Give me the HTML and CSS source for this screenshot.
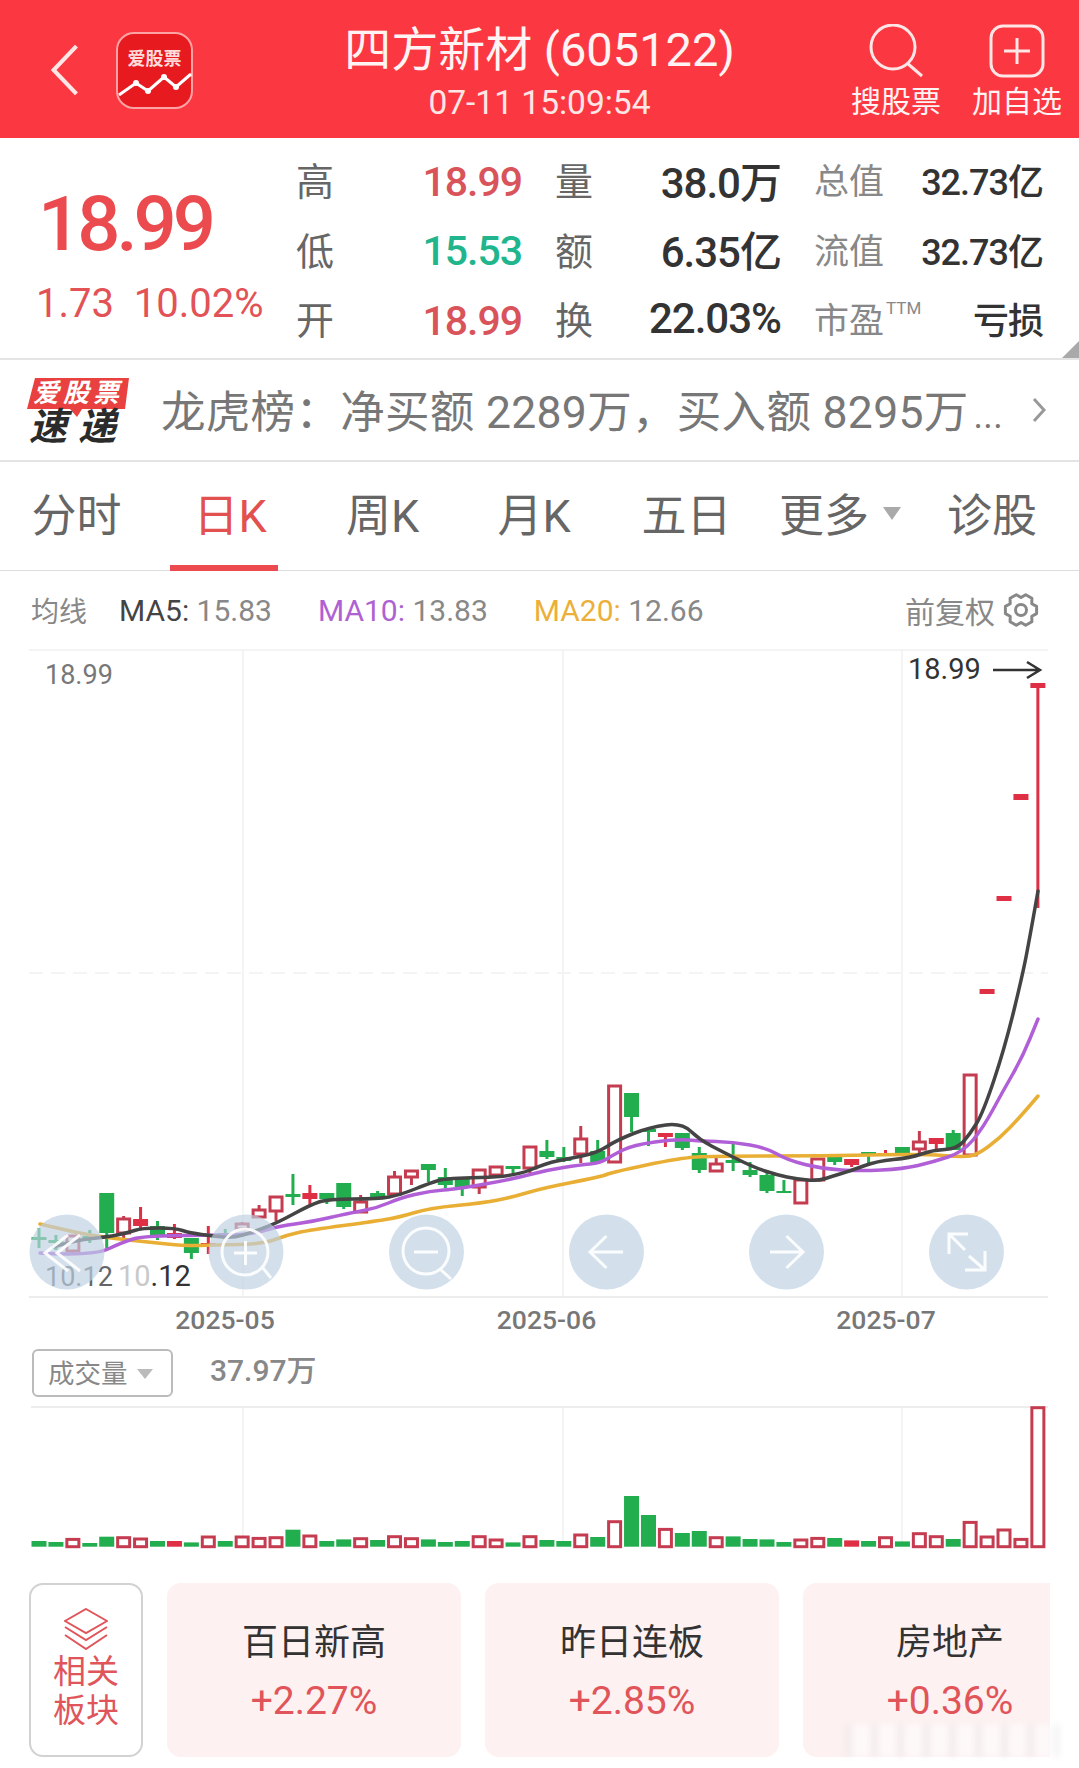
FILE: index.html
```html
<!DOCTYPE html>
<html lang="zh-CN">
<head>
    <meta charset="UTF-8">
    <meta name="viewport" content="width=device-width, initial-scale=1.0">
    <title>四方新材 (605122)</title>
    <link rel="stylesheet" href="styles.css">
</head>
<body>

    <header class="topbar">
        <div class="topbar-left">
            <svg class="back-icon" viewBox="0 0 26 50"><polyline points="24,2 2,25 24,48"/></svg>
            <svg class="app-logo" viewBox="0 0 77 77">
                <rect x="1" y="1" width="75" height="75" rx="17" class="app-logo-bg"/>
                <text x="38.5" y="33" class="app-logo-text">爱股票</text>
                <polyline points="3,63 20,51 32,59 48,45 60,55 75,42" class="app-logo-line"/>
                <circle cx="20" cy="51" r="3" fill="#fff"/>
                <circle cx="32" cy="59" r="3" fill="#fff"/>
                <circle cx="48" cy="45" r="3" fill="#fff"/>
                <circle cx="60" cy="55" r="3" fill="#fff"/>
            </svg>
        </div>
        <div class="topbar-title">
            <h1>四方新材 (605122)</h1>
            <div class="time">07-11 15:09:54</div>
        </div>
        <div class="topbar-actions">
            <div class="action">
                <svg viewBox="0 0 56 54"><circle cx="25" cy="23" r="22"/><line x1="39" y1="39" x2="54" y2="52"/></svg>
                <span>搜股票</span>
            </div>
            <div class="action">
                <svg viewBox="0 0 56 54"><rect x="2" y="2" width="52" height="50" rx="12"/><line x1="15" y1="27" x2="41" y2="27"/><line x1="28" y1="14" x2="28" y2="40"/></svg>
                <span>加自选</span>
            </div>
        </div>
    </header>

    <section class="quote">
        <div class="price-box">
            <div class="price">18.99</div>
            <div class="change">1.73&nbsp; 10.02%</div>
        </div>
        <div class="stats">
            <div class="stat"><span class="stat-label">高</span><span class="stat-num up">18.99</span></div>
            <div class="stat"><span class="stat-label">量</span><span class="stat-num">38.0万</span></div>
            <div class="stat small"><span class="stat-label">总值</span><span class="stat-num">32.73亿</span></div>
            <div class="stat"><span class="stat-label">低</span><span class="stat-num down">15.53</span></div>
            <div class="stat"><span class="stat-label">额</span><span class="stat-num">6.35亿</span></div>
            <div class="stat small"><span class="stat-label">流值</span><span class="stat-num">32.73亿</span></div>
            <div class="stat"><span class="stat-label">开</span><span class="stat-num up">18.99</span></div>
            <div class="stat"><span class="stat-label">换</span><span class="stat-num">22.03%</span></div>
            <div class="stat small"><span class="stat-label">市盈<sup>TTM</sup></span><span class="stat-num">亏损</span></div>
        </div>
        <div class="corner"></div>
    </section>

    <section class="news">
        <svg class="news-logo" viewBox="0 -12 112 96">
            <polygon points="9,1 103,1 99,32 56,32 51,40 44,32 1,32" fill="#e8413f"/>
            <text x="52" y="25" class="news-logo-top">爱股票</text>
            <text x="3" y="63" class="news-logo-bottom">速递</text>
        </svg>
        <div class="news-text">龙虎榜：净买额 2289万，买入额 8295万<small>...</small></div>
        <svg class="news-arrow" viewBox="0 0 14 26"><polyline points="2,2 12,13 2,24"/></svg>
    </section>

    <nav class="tabs">
        <div class="tab">分时</div>
        <div class="tab active">日K</div>
        <div class="tab">周K</div>
        <div class="tab">月K</div>
        <div class="tab">五日</div>
        <div class="tab">更多<i class="tab-caret"></i></div>
        <div class="tab">诊股</div>
    </nav>

    <section class="ma-row">
        <span class="ma-title">均线</span>
        <span class="ma-item"><b class="ma5">MA5:</b> 15.83</span>
        <span class="ma-item"><b class="ma10">MA10:</b> 13.83</span>
        <span class="ma-item"><b class="ma20">MA20:</b> 12.66</span>
        <span class="ma-adjust">前复权
            <svg viewBox="-18 -18 36 36"><polygon points="15.6,3.6 10.8,6.25 10.9,11.7 4.7,15.3 0,12.5 -4.7,15.3 -10.9,11.7 -10.8,6.25 -15.6,3.6 -15.6,-3.6 -10.8,-6.25 -10.9,-11.7 -4.7,-15.3 0,-12.5 4.7,-15.3 10.9,-11.7 10.8,-6.25 15.6,-3.6"/><circle r="5.5"/></svg>
        </span>
    </section>

    <svg class="price-chart" viewBox="0 649 1079 701">
        <line x1="29" y1="650" x2="1048" y2="650" class="grid"/>
        <line x1="29" y1="1297" x2="1048" y2="1297" class="grid-dark"/>
        <line x1="243" y1="650" x2="243" y2="1297" class="grid"/>
        <line x1="563" y1="650" x2="563" y2="1297" class="grid"/>
        <line x1="902" y1="650" x2="902" y2="1297" class="grid"/>
        <line x1="29" y1="973" x2="1048" y2="973" class="grid dashed"/>

        <g id="candles"></g>
        <g id="maLines"></g>

        <text x="45" y="684" class="chart-high">18.99</text>
        <text x="908" y="679" class="chart-last">18.99</text>
        <path d="M993 670H1039M1027 662L1040 670L1027 678" class="last-arrow"/>

        <text x="45" y="1286" class="chart-low">10.12</text>
        <text x="118" y="1286" class="chart-low-top"><tspan fill="#c9c9c9">10</tspan><tspan fill="#333">.12</tspan></text>

        <circle cx="67" cy="1252" r="37.5" class="nav-btn"/>
        <path d="M68 1235L45 1253L68 1271M80 1235L57 1253L80 1271" class="nav-icon"/>
        <circle cx="246" cy="1252" r="37.5" class="nav-btn"/>
        <path d="M234 1253H257M245.500 1241V1265M263 1268L271 1278" class="nav-icon"/>
        <circle cx="245" cy="1252" r="23" class="nav-icon"/>
        <circle cx="426.500" cy="1252" r="37.5" class="nav-btn"/>
        <circle cx="426" cy="1251" r="23" class="nav-icon"/>
        <path d="M414 1252H438M441 1270L451 1279" class="nav-icon"/>
        <circle cx="606.500" cy="1252" r="37.5" class="nav-btn"/>
        <path d="M623 1252H590M606.500 1236L590 1252L606.500 1268" class="nav-icon"/>
        <circle cx="786.500" cy="1252" r="37.5" class="nav-btn"/>
        <path d="M770 1252H803M786.500 1236L803 1252L786.500 1268" class="nav-icon"/>
        <circle cx="966.500" cy="1252" r="37.5" class="nav-btn"/>
        <path d="M968 1234H949V1254M949 1234L965 1250M965 1270H985V1251M985 1270L969 1256" class="nav-icon"/>

        <text x="225" y="1329" class="axis-date">2025-05</text>
        <text x="546.500" y="1329" class="axis-date">2025-06</text>
        <text x="886" y="1329" class="axis-date">2025-07</text>
    </svg>

    <section class="vol-row">
        <div class="vol-select">成交量<i class="vol-caret"></i></div>
        <div class="vol-value">37.97万</div>
    </section>

    <svg class="vol-chart" viewBox="0 1405 1079 155">
        <line x1="31" y1="1406" x2="1048" y2="1406" class="grid-dark"/>
        <line x1="243" y1="1406" x2="243" y2="1546" class="grid"/>
        <line x1="563" y1="1406" x2="563" y2="1546" class="grid"/>
        <line x1="902" y1="1406" x2="902" y2="1546" class="grid"/>
        <g id="volBars"></g>
    </svg>

    <section class="sectors">
        <div class="sector-head">
            <svg viewBox="0 0 44 42">
                <polygon points="22,1 43,13 22,25 1,13"/>
                <polyline points="1,19 22,32 43,19"/>
                <polyline points="1,27 22,41 43,27"/>
            </svg>
            <div>相关<br>板块</div>
        </div>
        <div class="sector-list">
            <div class="sector-card"><div class="sector-name">百日新高</div><div class="sector-pct">+2.27%</div></div>
            <div class="sector-card"><div class="sector-name">昨日连板</div><div class="sector-pct">+2.85%</div></div>
            <div class="sector-card"><div class="sector-name">房地产</div><div class="sector-pct">+0.36%</div></div>
        </div>
    </section>

    <div class="watermark"></div>

    <script src="chart.js"></script>
</body>
</html>
```
FILE: styles.css
```css
* {
    box-sizing: border-box;
}
body {
    margin: 0;
    width: 1079px;
    height: 1768px;
    overflow: hidden;
    position: relative;
    background-color: white;
    font-family: Roboto, "Noto Sans CJK SC", sans-serif;
    color: #333;
}

/* top bar */
.topbar {
    height: 138px;
    background-color: #fb3841;
    display: grid;
    grid-template-columns: 1fr auto 1fr;
    align-items: center;
    color: #fff3f3;
}
.topbar-left {
    display: flex;
    align-items: center;
    padding-left: 51px;
    gap: 37px;
}
.back-icon {
    width: 28px;
    height: 52px;
    fill: none;
    stroke: #ffe6e6;
    stroke-width: 4;
    margin-top: 2px;
}
.app-logo {
    width: 77px;
    height: 77px;
    margin-top: 2px;
}
.app-logo-bg {
    fill: #e71a1f;
    stroke: #fda3a6;
    stroke-width: 2;
}
.app-logo-text {
    fill: #ffdcdc;
    font-size: 18px;
    font-weight: 700;
    text-anchor: middle;
}
.app-logo-line {
    fill: none;
    stroke: #fff;
    stroke-width: 3;
}
.topbar-title {
    align-self: start;
    padding-top: 23px;
    text-align: center;
}
.topbar-title h1 {
    margin: 0;
    font-size: 47px;
    font-weight: 400;
    line-height: 54px;
}
.time {
    font-size: 33.5px;
    line-height: 40px;
    margin-top: 6px;
    color: #ffe6e6;
}
.topbar-actions {
    display: flex;
    justify-content: flex-end;
    padding-right: 16px;
    gap: 29px;
}
.action {
    width: 92px;
    display: flex;
    flex-direction: column;
    align-items: center;
    font-size: 30px;
    line-height: 34px;
    white-space: nowrap;
    padding-top: 4px;
}
.action svg {
    width: 56px;
    height: 54px;
    fill: none;
    stroke: #ffe6e6;
    stroke-width: 3;
    margin-bottom: 7px;
}

/* quote panel */
.quote {
    height: 222px;
    border-bottom: 2px solid #e4e4e4;
    display: flex;
    position: relative;
}
.price-box {
    width: 296px;
    padding-left: 36px;
}
.price {
    font-size: 76px;
    font-weight: 500;
    line-height: 84px;
    letter-spacing: -4px;
    margin-top: 44px;
    padding-left: 2px;
    color: #eb4a4e;
}
.change {
    font-size: 40px;
    line-height: 48px;
    margin-top: 14px;
    color: #e25256;
    white-space: nowrap;
}
.stats {
    display: grid;
    grid-template-columns: 226px 226px 229px;
    grid-auto-rows: 69.5px;
    column-gap: 33px;
    padding-top: 9px;
}
.stat {
    display: flex;
    justify-content: space-between;
    align-items: center;
}
.stat-label {
    font-size: 38px;
    margin-bottom: 6px;
    color: #666;
}
.stat-num {
    font-size: 42px;
    font-weight: 500;
    letter-spacing: -1px;
    margin-bottom: 5px;
}
.stat-num.up {
    font-size: 41px;
    margin-bottom: 0;
    color: #d9545a;
}
.stat-num.down {
    font-size: 41px;
    margin-bottom: 0;
    color: #20b58c;
}
.stat.small .stat-label {
    font-size: 35px;
    color: #888;
}
.stat.small .stat-num {
    font-size: 36px;
}
.stat-label sup {
    font-size: 17px;
    vertical-align: 19px;
    line-height: 0;
    margin-left: 2px;
}
.corner {
    position: absolute;
    right: 0;
    bottom: 0;
    width: 0;
    height: 0;
    border-left: 17px solid transparent;
    border-bottom: 17px solid #a9a9a9;
}

/* news line */
.news {
    height: 102px;
    border-bottom: 2px solid #e4e4e4;
    display: flex;
    align-items: center;
    padding-left: 26px;
}
.news-logo {
    flex: none;
    width: 112px;
    height: 96px;
    margin-top: 6px;
}
.news-logo-top {
    fill: #fff;
    font-size: 26px;
    font-weight: 700;
    font-style: italic;
    letter-spacing: 4px;
    text-anchor: middle;
}
.news-logo-bottom {
    fill: #2b2b2b;
    font-size: 38px;
    font-weight: 700;
    font-style: italic;
    letter-spacing: 11px;
}
.news-text {
    margin-left: 23px;
    margin-bottom: 4px;
    width: 840px;
    font-size: 44.5px;
    letter-spacing: 0.3px;
    color: #777;
    white-space: nowrap;
}
.news-text small {
    font-size: 36px;
    margin-left: 5px;
}
.news-arrow {
    flex: none;
    width: 14px;
    height: 26px;
    margin-left: 31px;
    fill: none;
    stroke: #999;
    stroke-width: 3;
}

/* period tabs */
.tabs {
    height: 109px;
    border-bottom: 1px solid #ddd;
    display: grid;
    grid-template-columns: 153px 154px 151px 152px 153px 154px 150px;
}
.tab {
    position: relative;
    display: flex;
    align-items: center;
    justify-content: center;
    font-size: 45px;
    color: #666;
    padding-bottom: 7px;
}
.tab.active {
    color: #e2504f;
}
.tab.active::after {
    content: "";
    position: absolute;
    left: 17px;
    bottom: -1px;
    width: 108px;
    height: 6px;
    background-color: #ec4a4e;
}
.tab-caret {
    margin-left: 14px;
    margin-top: 2px;
    border-left: 9px solid transparent;
    border-right: 9px solid transparent;
    border-top: 13px solid #aaa;
}

/* moving averages */
.ma-row {
    height: 78px;
    display: flex;
    align-items: center;
    padding: 0 40px 0 31px;
    font-size: 30px;
    color: #888;
}
.ma-title {
    font-size: 28px;
    margin-right: 32px;
}
.ma-item {
    margin-right: 46px;
    white-space: nowrap;
}
.ma-item b {
    font-weight: 400;
}
.ma5 {
    color: #444;
}
.ma10 {
    color: #ae62d2;
}
.ma20 {
    color: #ebb03a;
}
.ma-adjust {
    margin-left: auto;
    font-size: 30px;
    display: flex;
    align-items: center;
    gap: 8px;
}
.ma-adjust svg {
    width: 36px;
    height: 36px;
    fill: none;
    stroke: #888;
    stroke-width: 3;
    stroke-linejoin: round;
}

/* charts */
.price-chart {
    display: block;
    width: 1079px;
    height: 701px;
}
.vol-chart {
    display: block;
    width: 1079px;
    height: 155px;
}
.grid {
    stroke: #f1f1f1;
    stroke-width: 1.5;
}
.grid-dark {
    stroke: #e6e6e6;
    stroke-width: 1.5;
}
.dashed {
    stroke-dasharray: 14 8;
}
.ma-line {
    fill: none;
    stroke-width: 3.5;
    stroke-linejoin: round;
    stroke-linecap: round;
}
.chart-high {
    font-size: 27px;
    fill: #777;
}
.chart-last {
    font-size: 29px;
    fill: #333;
}
.last-arrow {
    fill: none;
    stroke: #333;
    stroke-width: 2.5;
}
.chart-low {
    font-size: 27px;
    fill: #666;
}
.chart-low-top {
    font-size: 29px;
}
.nav-btn {
    fill: rgba(190, 209, 226, 0.67);
}
.nav-icon {
    fill: none;
    stroke: #fff;
    stroke-width: 3;
    opacity: 0.9;
}
.axis-date {
    font-size: 26.5px;
    font-weight: 500;
    fill: #777;
    text-anchor: middle;
}

/* volume header */
.vol-row {
    height: 56px;
    display: flex;
    align-items: flex-start;
    padding-left: 32px;
}
.vol-select {
    width: 141px;
    height: 48px;
    margin-top: -1px;
    border: 2px solid #bbb;
    border-radius: 6px;
    display: flex;
    align-items: center;
    padding: 0 0 4px 14px;
    font-size: 26.5px;
    color: #888;
}
.vol-caret {
    margin-left: 9px;
    margin-top: 6px;
    border-left: 8px solid transparent;
    border-right: 8px solid transparent;
    border-top: 10px solid #bbb;
}
.vol-value {
    margin-left: 37px;
    font-size: 30px;
    font-weight: 500;
    line-height: 42px;
    color: #888;
}

/* related sectors */
.sectors {
    margin-top: 22px;
    height: 174px;
    display: flex;
    gap: 24px;
    padding: 0 29px;
}
.sector-head {
    flex: none;
    width: 114px;
    border: 2px solid #d2d2d2;
    border-radius: 14px;
    display: flex;
    flex-direction: column;
    align-items: center;
    padding-top: 23px;
    font-size: 33px;
    line-height: 39px;
    text-align: center;
    color: #e0555a;
}
.sector-head svg {
    width: 44px;
    height: 42px;
    fill: none;
    stroke: #e0555a;
    stroke-width: 2;
    margin-bottom: 2px;
}
.sector-list {
    flex: 1;
    display: flex;
    gap: 24px;
    overflow: hidden;
}
.sector-card {
    flex: none;
    width: 294px;
    background-color: #fdf1f1;
    border-radius: 14px;
    text-align: center;
    padding-top: 35px;
}
.sector-name {
    font-size: 36px;
    line-height: 50px;
    color: #333;
}
.sector-pct {
    font-size: 39px;
    line-height: 46px;
    margin-top: 10px;
    color: #e0545a;
}

/* faint stamp over the bottom corner */
.watermark {
    position: absolute;
    left: 845px;
    top: 1724px;
    width: 225px;
    height: 33px;
    background: repeating-linear-gradient(90deg, rgba(228, 228, 228, 0.4) 0 7px, rgba(255, 255, 255, 0.55) 7px 26px);
    filter: blur(3px);
}
```
FILE: chart.js
```js
const SVG_NS = 'http://www.w3.org/2000/svg';
const STEP = 16.93;
const COLORS = { u: '#c53c50', r: '#de2f45', g: '#22ad4f' };
const BASELINE = 1545.7;

// body top, body bottom, wick top, wick bottom, type (u = hollow, r = red, g = green)
const candles = [
    [1237, 1240, 1228, 1248, 'g'], [1240, 1243, 1235, 1250, 'g'], [1236, 1251, 1236, 1253, 'u'],
    [1236, 1239, 1230, 1243, 'g'], [1193, 1233, 1193, 1248, 'g'], [1219, 1233, 1216, 1243, 'u'],
    [1219, 1226, 1207, 1230, 'r'], [1226, 1235, 1221, 1240, 'g'], [1233, 1238, 1224, 1239, 'r'],
    [1238, 1253, 1238, 1259, 'g'], [1243, 1246, 1226, 1254, 'r'], [1233, 1238, 1229, 1240, 'g'],
    [1224, 1229, 1222, 1230, 'u'], [1210, 1217, 1205, 1217, 'u'], [1197, 1211, 1197, 1221, 'u'],
    [1194, 1197, 1174, 1205, 'g'], [1193, 1199, 1185, 1205, 'r'], [1193, 1199, 1193, 1204, 'g'],
    [1183, 1207, 1183, 1209, 'g'], [1202, 1212, 1195, 1212, 'u'], [1193, 1197, 1191, 1200, 'g'],
    [1177, 1194, 1171, 1194, 'u'], [1171, 1177, 1171, 1185, 'u'], [1164, 1170, 1164, 1182, 'g'],
    [1177, 1185, 1168, 1188, 'g'], [1179, 1187, 1179, 1196, 'g'], [1170, 1187, 1170, 1194, 'u'],
    [1167, 1175, 1167, 1177, 'u'], [1166, 1169, 1166, 1173, 'g'], [1147, 1168, 1147, 1173, 'u'],
    [1151, 1157, 1140, 1159, 'g'], [1157, 1161, 1147, 1162, 'g'], [1139, 1154, 1126, 1163, 'u'],
    [1151, 1162, 1140, 1162, 'g'], [1086, 1162, 1086, 1162, 'u'], [1093, 1117, 1093, 1132, 'g'],
    [1129, 1132, 1129, 1146, 'g'], [1133, 1137, 1133, 1147, 'r'], [1133, 1148, 1133, 1150, 'g'],
    [1153, 1170, 1147, 1173, 'g'], [1164, 1171, 1158, 1171, 'u'], [1160, 1163, 1144, 1171, 'g'],
    [1170, 1175, 1162, 1177, 'g'], [1175, 1191, 1170, 1193, 'g'], [1191, 1193, 1180, 1193, 'g'],
    [1180, 1203, 1180, 1203, 'u'], [1159, 1180, 1159, 1180, 'u'], [1157, 1162, 1157, 1165, 'g'],
    [1159, 1165, 1159, 1167, 'r'], [1152, 1155, 1152, 1163, 'g'], [1153, 1156, 1150, 1156, 'r'],
    [1147, 1154, 1147, 1154, 'g'], [1142, 1149, 1131, 1153, 'u'], [1138, 1144, 1138, 1150, 'r'],
    [1133, 1150, 1130, 1150, 'g'], [1075, 1155, 1075, 1155, 'u'], [989, 994, 989, 994, 'r'],
    [896, 901, 896, 901, 'r'], [794, 800, 794, 800, 'r'], [683, 688, 683, 908, 'r']
];

const maLines = [
    { color: '#e9ae34', points: '40,1224 77,1233 110,1238 147,1242 187,1246 213,1245 263,1244 287,1235 310,1230 377,1221 400,1217 430,1208 483,1203 513,1197 543,1188 600,1177 613,1172 680,1158 713,1156 820,1156 923,1154 963,1157 977,1155 1000,1138 1020,1117 1038,1096' },
    { color: '#b15fd6', points: '40,1253 93,1256 123,1242 143,1236 213,1235 240,1235 260,1232 280,1226 310,1222 350,1213 377,1208 400,1198 430,1191 457,1189 513,1179 547,1170 580,1165 600,1163 613,1155 633,1145 677,1139 700,1141 733,1142 767,1148 787,1160 823,1169 860,1171 903,1169 933,1162 963,1152 983,1128 1003,1091 1022,1058 1038,1019' },
    { color: '#444444', points: '53,1247 77,1240 107,1237 127,1233 142,1228 175,1228 190,1233 213,1236 233,1238 253,1232 277,1223 310,1205 328,1199 378,1199 400,1195 430,1183 447,1178 513,1177 547,1163 567,1159 597,1153 617,1140 650,1127 682,1123 700,1140 723,1152 753,1167 777,1175 797,1179 818,1181 833,1176 850,1171 877,1161 910,1158 933,1150 957,1149 970,1134 983,1113 1005,1047 1023,973 1030,936 1038,891' }
];

const volHeights = [
    5.7, 4.7, 7.3, 3.7, 10, 9, 7.7, 5.7, 5.7, 4.3, 9.7, 5.7, 9.7, 8.3, 9, 17, 10.7, 5.7, 7.3, 8,
    6.7, 10, 8, 7.3, 4.7, 5.7, 10, 6.7, 4.3, 10, 6.7, 5.7, 11.7, 9.7, 25, 50.7, 31.7, 17.3, 13.7, 15.7,
    9, 10.3, 7.7, 7.3, 4.7, 6.7, 8.3, 8.7, 6.3, 5.7, 9, 5.3, 13, 10, 7.7, 24.3, 9.7, 16.7, 7.3, 139
];
const volTypes = 'gguggu' + 'ugrgug' + 'uuugug' + 'guguug' + 'gguugu' +
    'ggugug' + 'guggug' + 'ggguug' + 'rguguu' + 'guuuuu';

function el(name, attrs) {
    const node = document.createElementNS(SVG_NS, name);
    Object.keys(attrs).forEach(key => node.setAttribute(key, attrs[key]));
    return node;
}

function xAt(i) {
    return 39 + STEP * i;
}

// Hollow bars are stroked, the others filled
function addBody(parent, x, top, bottom, type) {
    if (type === 'u') {
        parent.appendChild(el('rect', {
            x: x - 6, y: top, width: 12, height: bottom - top,
            fill: 'white', stroke: COLORS.u, 'stroke-width': 3
        }));
    } else {
        parent.appendChild(el('rect', {
            x: x - 7.5, y: top, width: 15, height: bottom - top, fill: COLORS[type]
        }));
    }
}

function drawCandles() {
    const group = document.getElementById('candles');
    candles.forEach((c, i) => {
        const x = xAt(i);
        group.appendChild(el('line', {
            x1: x, x2: x, y1: c[2], y2: c[3],
            stroke: COLORS[c[4]], 'stroke-width': 3
        }));
        addBody(group, x, c[0], c[1], c[4]);
    });
}

// Rounds the corners of a point list with quadratic curves through the midpoints
function smoothPath(points) {
    const p = points.split(' ').map(pair => pair.split(',').map(Number));
    let d = `M${p[0][0]} ${p[0][1]}`;
    for (let i = 1; i < p.length - 1; i++) {
        const midX = (p[i][0] + p[i + 1][0]) / 2;
        const midY = (p[i][1] + p[i + 1][1]) / 2;
        d += `Q${p[i][0]} ${p[i][1]} ${midX} ${midY}`;
    }
    const last = p[p.length - 1];
    return d + `L${last[0]} ${last[1]}`;
}

function drawLines() {
    const group = document.getElementById('maLines');
    maLines.forEach(line => {
        group.appendChild(el('path', {
            d: smoothPath(line.points), stroke: line.color, class: 'ma-line'
        }));
    });
}

function drawVolume() {
    const group = document.getElementById('volBars');
    volHeights.forEach((h, i) => {
        addBody(group, xAt(i), BASELINE - h, BASELINE, volTypes[i]);
    });
}

drawCandles();
drawLines();
drawVolume();
```
